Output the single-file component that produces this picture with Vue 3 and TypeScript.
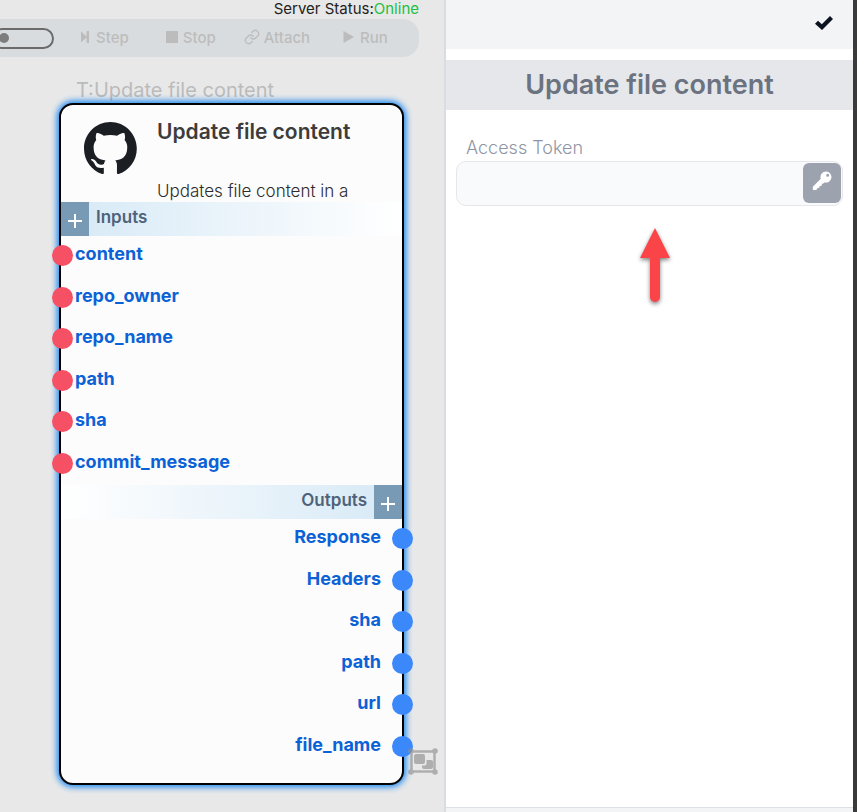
<script setup lang="ts">
import { ref } from 'vue'

interface Action {
  id: string
  label: string
}

const actions: Action[] = [
  { id: 'step', label: 'Step' },
  { id: 'stop', label: 'Stop' },
  { id: 'attach', label: 'Attach' },
  { id: 'run', label: 'Run' },
]

const inputs: string[] = ['content', 'repo_owner', 'repo_name', 'path', 'sha', 'commit_message']
const outputs: string[] = ['Response', 'Headers', 'sha', 'path', 'url', 'file_name']

const debug = ref(false)
const token = ref('')
</script>

<template>
  <div class="app">
    <main class="canvas">
      <p class="status">Server Status:<span class="online">Online</span></p>
      <div class="toolbar">
        <input v-model="debug" class="toggle" type="checkbox" aria-label="Debug" />
        <button v-for="a in actions" :key="a.id" type="button" class="action" :class="a.id">
          <svg v-if="a.id === 'step'" class="i-step" viewBox="0 0 8 12">
            <path d="M0 0.500 5 5V0.500H5.500V5L6 5.500V0H8V12H6V6.500L5.500 7V11.500H5V7L0 11.500Z" />
          </svg>
          <svg v-else-if="a.id === 'stop'" class="i-stop" viewBox="0 0 12 12"><path d="M0 0H12V12H0Z" /></svg>
          <svg v-else-if="a.id === 'attach'" class="i-link" viewBox="0 0 24 24">
            <path d="M10 13a5 5 0 0 0 7.540.540l3-3a5 5 0 0 0-7.070-7.070l-1.720 1.710" />
            <path d="M14 11a5 5 0 0 0-7.540-.540l-3 3a5 5 0 0 0 7.070 7.070l1.710-1.710" />
          </svg>
          <svg v-else class="i-run" viewBox="0 0 11 12"><path d="M0.500 0 11 6 0.500 12Z" /></svg>
          <span>{{ a.label }}</span>
        </button>
      </div>

      <article class="node">
        <span class="tag">T:Update file content</span>
        <header class="node-head">
          <svg class="logo" viewBox="0 0 98 96">
            <path
              fill-rule="evenodd"
              d="M48.854 0C21.839 0 0 22 0 49.217c0 21.756 13.993 40.172 33.405 46.690 2.427.490 3.316-1.059 3.316-2.362 0-1.141-.080-5.052-.080-9.127-13.590 2.934-16.420-5.867-16.420-5.867-2.184-5.704-5.420-7.170-5.420-7.170-4.448-3.015.324-3.015.324-3.015 4.934.326 7.523 5.052 7.523 5.052 4.367 7.496 11.404 5.378 14.235 4.074.404-3.178 1.699-5.378 3.074-6.600-10.839-1.141-22.243-5.378-22.243-24.283 0-5.378 1.940-9.778 5.014-13.200-.485-1.222-2.184-6.275.486-13.038 0 0 4.125-1.304 13.426 5.052a46.970 46.970 0 0 1 12.214-1.630c4.125 0 8.330.571 12.213 1.630 9.302-6.356 13.427-5.052 13.427-5.052 2.670 6.763.970 11.816.485 13.038 3.155 3.422 5.015 7.822 5.015 13.200 0 18.905-11.404 23.060-22.324 24.283 1.780 1.548 3.316 4.481 3.316 9.126 0 6.600-.080 11.897-.080 13.526 0 1.304.890 2.853 3.316 2.364 19.412-6.520 33.405-24.935 33.405-46.691C97.707 22 75.788 0 48.854 0z"
            />
          </svg>
          <div class="node-text">
            <h2>Update file content</h2>
            <p>Updates file content in a</p>
          </div>
        </header>

        <div class="band band-in">
          <button type="button" class="add" aria-label="Add input">
            <svg viewBox="0 0 14 14"><path d="M7 0V14M0 7H14" /></svg>
          </button>
          <h3>Inputs</h3>
        </div>
        <ul class="ports ports-in">
          <li v-for="name in inputs" :key="name"><i class="dot"></i><span>{{ name }}</span></li>
        </ul>

        <div class="band band-out">
          <h3>Outputs</h3>
          <button type="button" class="add" aria-label="Add output">
            <svg viewBox="0 0 14 14"><path d="M7 0V14M0 7H14" /></svg>
          </button>
        </div>
        <ul class="ports ports-out">
          <li v-for="name in outputs" :key="name"><span>{{ name }}</span><i class="dot"></i></li>
        </ul>

        <button type="button" class="group" aria-label="Group">
          <svg viewBox="0 0 30 27">
            <path class="frame" d="M3.500 3.500H26.500V23.500H3.500Z" />
            <circle cx="3" cy="3" r="2.800" /><circle cx="27" cy="3" r="2.800" />
            <circle cx="3" cy="24" r="2.800" /><circle cx="27" cy="24" r="2.800" />
            <rect x="6" y="6" width="11" height="10" rx="2" />
            <path d="M18.500 12H23a2 2 0 0 1 2 2v5a2 2 0 0 1-2 2h-7a2 2 0 0 1-2-2v-1.500h2.500a2 2 0 0 0 2-2Z" />
          </svg>
        </button>
      </article>
    </main>

    <aside class="panel">
      <div class="panel-top">
        <button type="button" class="confirm" aria-label="Confirm">
          <svg viewBox="0 0 18 14"><path d="M0 7.800 3 4.800 6.800 8.200 15 0 18 2.900 7 14Z" /></svg>
        </button>
      </div>
      <h1>Update file content</h1>
      <form class="form" @submit.prevent>
        <label for="token">Access Token</label>
        <div class="field">
          <input id="token" v-model="token" type="text" autocomplete="off" />
          <button type="button" class="key" aria-label="Choose credential">
            <svg viewBox="0 0 20 20">
              <path
                fill-rule="evenodd"
                d="M14 0.400a5.600 5.600 0 1 1-1.600 11L11 12.800H9.800V14.300L9 15H7.500V16.300L6.800 17H5.200V18L4.200 19H1.500Q0.800 19 0.800 18.300V15.800L8.800 7.800A5.600 5.600 0 0 1 14 0.400ZM15.700 2.800a1.500 1.500 0 1 0 0 3 1.500 1.500 0 0 0 0-3Z"
              />
            </svg>
          </button>
          <svg class="pointer" viewBox="0 0 30 76">
            <path d="M15 0 30 30H20V69a5 5 0 0 1-10 0V30H0Z" />
          </svg>
        </div>
      </form>
      <div class="panel-foot"></div>
    </aside>
    <div class="edge"></div>
  </div>
</template>

<style>
body {
  margin: 0;
}
</style>

<style scoped>
.app {
  display: grid;
  grid-template-columns: minmax(0, 446fr) minmax(0, 407fr) 4px;
  min-height: 100vh;
  font-family: Inter, "Liberation Sans", sans-serif;
  color: #222;
}
.app * {
  box-sizing: border-box;
}
h1,
h2,
h3,
p,
ul {
  margin: 0;
  padding: 0;
}
button {
  padding: 0;
  border: 0;
  background: none;
  font: inherit;
  color: inherit;
  cursor: pointer;
}
svg {
  display: block;
  flex: none;
  fill: currentColor;
}
.canvas {
  position: relative;
  isolation: isolate;
  overflow: hidden;
  background: #e8e8e8;
  border-right: 2px solid #d9dce1;
}
.status {
  height: 19px;
  padding-right: 25px;
  text-align: right;
  font-size: 15px;
  line-height: 18px;
}
.online {
  color: #22c043;
}
.toolbar {
  display: flex;
  align-items: center;
  height: 38px;
  margin-right: 25px;
  border-radius: 0 16px 16px 0;
  background: #d9dcdf;
}
.toggle {
  appearance: none;
  flex: none;
  display: flex;
  align-items: center;
  width: 62px;
  height: 21px;
  margin: 0 27px 0 -8px;
  padding-left: 5px;
  border: 2px solid #6b6b6b;
  border-radius: 11px;
}
.toggle::before {
  content: "";
  width: 10px;
  height: 10px;
  border-radius: 50%;
  background: #7d7d7d;
}
.action {
  display: flex;
  align-items: center;
  font-size: 15px;
  font-weight: 500;
  line-height: 20px;
  color: #bcbcbc;
}
.action svg {
  margin-bottom: 2px;
}
.step {
  gap: 7px;
  margin-right: 37px;
}
.stop {
  gap: 5px;
  margin-right: 28px;
}
.attach {
  gap: 4px;
  margin-right: 33px;
}
.run {
  gap: 6px;
}
.i-step {
  width: 8px;
  height: 12px;
}
.i-stop {
  width: 12px;
  height: 12px;
}
.i-link {
  width: 16px;
  height: 16px;
  fill: none;
  stroke: currentColor;
  stroke-width: 2;
  stroke-linecap: round;
}
.i-run {
  width: 11px;
  height: 12px;
}
.node {
  position: absolute;
  top: 103px;
  left: 59px;
  width: 345px;
  padding-bottom: 14px;
  border: 2px solid #000;
  border-radius: 14px;
  background: #fcfcfc;
  box-shadow: 0 0 6px 2px #1484f0;
}
.tag {
  position: absolute;
  top: -27px;
  left: 15px;
  font-size: 20px;
  line-height: 24px;
  color: #bbb;
  white-space: nowrap;
  z-index: -1;
}
.node-head {
  display: flex;
  gap: 20px;
  height: 97px;
  padding: 15px 23px 0;
  overflow: hidden;
}
.logo {
  width: 53px;
  height: 52px;
  margin-top: 2px;
  color: #1b1f23;
}
.node-text {
  white-space: nowrap;
}
.node-text h2 {
  font-size: 21px;
  font-weight: 600;
  line-height: 24px;
  color: #3c3c3c;
}
.node-text p {
  margin-top: 35px;
  font-size: 17px;
  font-weight: 300;
  line-height: 24px;
  color: #2c2c2c;
}
.band {
  display: flex;
  height: 34px;
}
.band-in {
  background: linear-gradient(90deg, #d6e9f6, #fff);
}
.band-out {
  justify-content: flex-end;
  background: linear-gradient(270deg, #d6e9f6, #fff);
}
.band h3 {
  margin: 0 7px;
  font-size: 17px;
  font-weight: 600;
  line-height: 30px;
  color: #4f6279;
}
.add {
  display: grid;
  place-items: center;
  width: 28px;
  padding-top: 4px;
  background: #789ab5;
  color: #fff;
}
.add svg {
  width: 14px;
  height: 14px;
  stroke: currentColor;
  stroke-width: 2;
}
.ports {
  display: grid;
  grid-template-rows: repeat(6, 1fr);
  height: 249px;
  list-style: none;
  font-size: 18px;
  font-weight: 700;
  color: #0b62d6;
}
.ports li {
  display: flex;
  align-items: center;
  gap: 2px;
}
.ports span {
  padding-bottom: 4px;
}
.ports-in {
  margin: -1px 0 1px -9px;
}
.ports-out {
  margin: -1px -11px 2px 0;
}
.ports-out li {
  justify-content: flex-end;
  gap: 11px;
}
.dot {
  width: 21px;
  height: 21px;
  border-radius: 50%;
  background: #f55064;
}
.ports-out .dot {
  background: #3b88fb;
}
.group {
  position: absolute;
  right: -36px;
  bottom: 8px;
  color: #909090;
  opacity: 0.65;
}
.group svg {
  width: 30px;
  height: 27px;
}
.frame {
  fill: none;
  stroke: currentColor;
  stroke-width: 2.5;
}
.panel {
  display: flex;
  flex-direction: column;
  background: #fff;
}
.panel-top {
  display: flex;
  justify-content: flex-end;
  align-items: center;
  height: 49px;
  padding: 0 20px 3px 0;
  background: #f3f4f6;
}
.confirm svg {
  width: 18px;
  height: 14px;
  color: #0b1220;
}
.panel h1 {
  margin-top: 11px;
  background: #e5e7eb;
  font-size: 27px;
  font-weight: 600;
  line-height: 50px;
  text-align: center;
  color: #6b7280;
}
.form {
  flex: 1;
  padding: 26px 10px 0;
}
.form label {
  display: block;
  padding-left: 10px;
  font-size: 18px;
  font-weight: 300;
  line-height: 24px;
  color: #8f96a3;
}
.field {
  position: relative;
  display: flex;
  height: 45px;
  margin-top: 1px;
  padding: 1px 1px 1px 8px;
  border: 1px solid #e5e7eb;
  border-radius: 10px;
  background: #f9fafb;
}
.field input {
  flex: 1;
  min-width: 0;
  border: 0;
  outline: 0;
  background: none;
  font: inherit;
}
.key {
  display: grid;
  place-items: center;
  width: 38px;
  height: 40px;
  padding-bottom: 4px;
  border-radius: 6px;
  background: #9ca3af;
  color: #fff;
}
.key svg {
  width: 20px;
  height: 20px;
}
.pointer {
  position: absolute;
  top: 66px;
  left: calc(50% - 10px);
  width: 30px;
  height: 76px;
  overflow: visible;
  color: #fb4448;
  filter: drop-shadow(0 2px 2px rgba(0, 0, 0, 0.5));
}
.panel-foot {
  height: 5px;
  border-top: 1px solid #dcdfe4;
  background: #f3f4f6;
}
.edge {
  background: #3a3a3a;
}
</style>
